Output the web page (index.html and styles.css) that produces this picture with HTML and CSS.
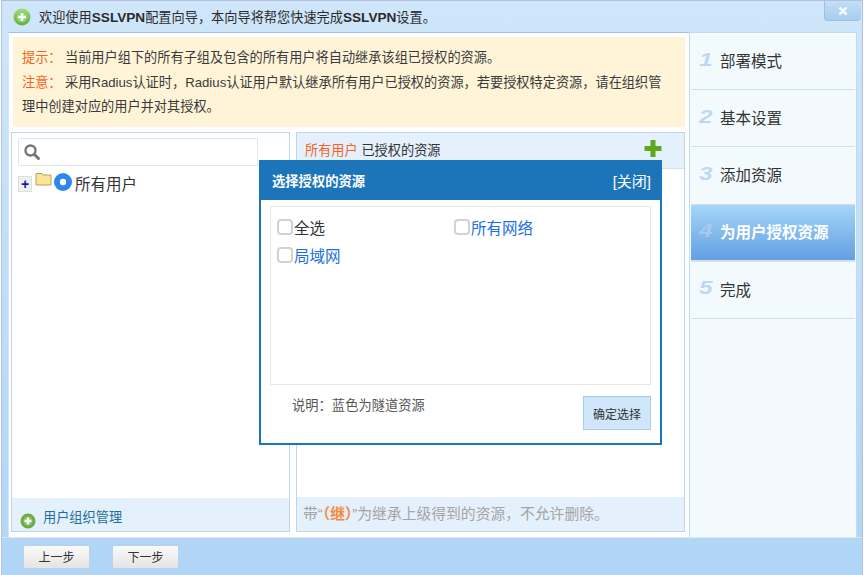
FILE: index.html
```html
<!DOCTYPE html>
<html lang="zh-CN">
<head>
  <meta charset="UTF-8">
  <title>SSLVPN配置向导</title>
  <link rel="stylesheet" href="styles.css">
</head>
<body>
  <div class="wizard">

    <div class="title-bar">
      <svg class="round-plus" width="18" height="18" viewBox="0 0 18 18">
        <defs>
          <linearGradient id="tipGreen" x1="0" y1="0" x2="0" y2="1">
            <stop offset="0" stop-color="#a4dc7e"/>
            <stop offset="1" stop-color="#5cb03c"/>
          </linearGradient>
        </defs>
        <circle cx="9" cy="9" r="8.500" fill="url(#tipGreen)"/>
        <circle cx="9" cy="9" r="5.500" fill="#8fd06c"/>
        <path d="M9 5v8M5 9h8" stroke="#fff" stroke-width="2.600"/>
      </svg>
      <span class="title-text">欢迎使用<b>SSLVPN</b>配置向导&#xFF0C;本向导将帮您快速完成<b>SSLVPN</b>设置。</span>
      <div class="close-tab">
        <svg width="10" height="10" viewBox="0 0 10 10"><path d="M1.500 1.500l7 7M8.500 1.500l-7 7" stroke="#fff" stroke-width="2.400"/></svg>
      </div>
    </div>

    <div class="body-row">
      <div class="main">
        <div class="notice">
          <p><span class="tag">提示&#xFF1A;</span>当前用户组下的所有子组及包含的所有用户将自动继承该组已授权的资源。</p>
          <p><span class="tag">注意&#xFF1A;</span>采用Radius认证时&#xFF0C;Radius认证用户默认继承所有用户已授权的资源&#xFF0C;若要授权特定资源&#xFF0C;请在组织管<br>理中创建对应的用户并对其授权。</p>
        </div>

        <div class="panels">
          <div class="panel left-panel">
            <div class="search-box">
              <svg width="18" height="18" viewBox="0 0 18 18">
                <circle cx="7.500" cy="7.500" r="5" fill="none" stroke="#777" stroke-width="2.400"/>
                <path d="M11.500 11.500l4 4" stroke="#777" stroke-width="3" stroke-linecap="round"/>
              </svg>
            </div>
            <div class="tree-row">
              <span class="expander">+</span>
              <svg class="folder" width="17" height="14" viewBox="0 0 17 14">
                <path d="M1 3V1.500h6L8 3h8v10H1z" fill="#f8e59a" stroke="#b5a25c"/>
              </svg>
              <svg class="node" width="18" height="18" viewBox="0 0 18 18">
                <circle cx="9" cy="9" r="9" fill="#2f86ec"/>
                <circle cx="9" cy="9" r="3.200" fill="#fff"/>
              </svg>
              <span class="tree-label">所有用户</span>
            </div>
            <div class="panel-foot org-foot">
              <svg class="org-icon" width="16" height="16" viewBox="0 0 16 16">
                <circle cx="8" cy="8" r="7.500" fill="#69ac46"/>
                <circle cx="8" cy="8" r="4.800" fill="#84c060"/>
                <path d="M8 4.500v7M4.500 8h7" stroke="#fff" stroke-width="2.400"/>
              </svg>
              <span>用户组织管理</span>
            </div>
          </div>

          <div class="panel right-panel">
            <div class="res-head">
              <span><span class="org">所有用户</span> 已授权的资源</span>
              <svg width="18" height="20" viewBox="0 0 18 20">
                <path d="M6.500 1h5v6h6v5h-6v6h-5v-6h-6V7h6z" fill="#5fa81e"/>
              </svg>
            </div>
            <div class="res-body"></div>
            <div class="panel-foot res-foot">带“<span class="org">&#xFF08;继&#xFF09;</span>”为继承上级得到的资源&#xFF0C;不允许删除。</div>
          </div>
        </div>
      </div>

      <ul class="steps">
        <li><i>1</i>部署模式</li>
        <li><i>2</i>基本设置</li>
        <li><i>3</i>添加资源</li>
        <li class="active"><i>4</i>为用户授权资源</li>
        <li><i>5</i>完成</li>
      </ul>
    </div>

    <div class="footer">
      <button class="step-btn">上一步</button>
      <button class="step-btn">下一步</button>
    </div>

    <div class="dialog">
      <div class="dialog-head">
        <b>选择授权的资源</b>
        <span class="dialog-close">[关闭]</span>
      </div>
      <div class="dialog-list">
        <label class="check"><span class="box"></span>全选</label>
        <label class="check tunnel"><span class="box"></span>所有网络</label>
        <label class="check tunnel"><span class="box"></span>局域网</label>
      </div>
      <div class="dialog-foot">
        <span class="legend">说明&#xFF1A;蓝色为隧道资源</span>
        <button class="ok-btn">确定选择</button>
      </div>
    </div>

  </div>
</body>
</html>
```

FILE: styles.css
```css
html, body { margin: 0; padding: 0; width: 100%; height: 100%; overflow: hidden; background: #fff; }
body { font-family: "Liberation Sans", "Noto Sans CJK SC", sans-serif; font-size: 13.200px; color: #333; }

.wizard { position: relative; width: 862px; height: 575px; box-sizing: border-box; margin-left: 1px; border: 1px solid #b4c0e0; border-bottom: none; background: linear-gradient(#cfe6fa, #b0d5f5); display: flex; flex-direction: column; }

.title-bar { height: 31px; display: flex; align-items: center; padding-left: 11px; position: relative; flex: none; }
.title-text { margin-left: 8px; color: #2b2b2b; }
.title-text b { font-size: 13.600px; }
.close-tab { position: absolute; right: 1px; top: 0; width: 37px; height: 20px; background: linear-gradient(#c3def7, #a7cdf0); border-radius: 0 0 4px 4px; border-left: 1px solid #9dbfe0; border-bottom: 1px solid #9dbfe0; box-sizing: border-box; display: flex; align-items: center; justify-content: center; }

.body-row { display: flex; flex: 1; min-height: 0; margin-left: 6px; margin-right: 5px; }
.main { width: 681px; background: #fff; padding: 4px 0 5px 2px; box-sizing: border-box; display: flex; flex-direction: column; border-top: 1px solid #9fc3e6; border-left: 1px solid #d5e6f5; }

.notice { height: 90px; margin-left: 2px; margin-right: 4px; box-sizing: border-box; background: #fff4d8; padding: 9px 0 0 9px; flex: none; white-space: nowrap; }
.notice p { margin: 0; line-height: 24.500px; color: #3a3a3a; }
.tag { color: #f4641e; display: inline-block; width: 43px; }

.panels { display: flex; gap: 6px; flex: 1; margin-top: 5px; min-height: 0; }
.panel { border: 1px solid #bcd6ec; box-sizing: border-box; display: flex; flex-direction: column; background: #fff; position: relative; }
.left-panel { width: 279px; }
.right-panel { width: 389px; margin-right: 4px; }

.search-box { height: 28px; margin: 5px 31px 0 6px; border: 1px solid #e6e6e6; box-sizing: border-box; display: flex; align-items: center; padding-left: 4px; flex: none; }

.tree-row { display: flex; align-items: center; height: 22px; margin: 5px 0 0 6px; }
.expander { width: 14px; height: 16px; line-height: 14px; text-align: center; background: #f0f0f0; border: 1px solid #e0e0e0; box-sizing: border-box; color: #1a1a9c; font-size: 14px; font-weight: bold; margin-top: 3px; }
.folder { margin: -6px 0 0 3px; }
.node { margin-left: 2px; }
.tree-label { font-size: 15.500px; margin-left: 3px; padding-top: 1px; color: #333; }

.panel-foot { margin-top: auto; background: #e4f0fb; flex: none; }
.org-foot { height: 33px; display: flex; align-items: flex-end; color: #1f6f9c; padding-left: 8px; }
.org-foot span { margin-left: 7px; line-height: 26px; }
.org-icon { margin-bottom: 2px; }
.res-foot { height: 34px; line-height: 35px; padding-left: 6px; font-size: 14.800px; color: #a4a4a4; }

.res-head { height: 36px; background: #e4f0fb; border-bottom: 1px solid #cfe2f2; display: flex; align-items: center; justify-content: space-between; padding: 0 22px 2px 8px; box-sizing: border-box; flex: none; }
.res-head svg { margin-top: -2px; }
.org { color: #f4641e; }
.res-foot .org { font-weight: bold; color: #f58a3c; }

.steps { list-style: none; margin: 0; padding: 0; flex: 1; background: #f3fafd; border: 1px solid #c3d9ec; border-bottom: none; box-sizing: border-box; }
.steps li { height: 57.200px; padding-bottom: 2px; display: flex; align-items: center; font-size: 15.500px; color: #333; border-bottom: 1px solid #d5dfe6; box-sizing: border-box; margin: 0 1px; }
.steps i { font-size: 18px; font-weight: bold; color: #bcd8f4; width: 29px; padding-left: 6px; box-sizing: border-box; transform: scaleX(1.35); transform-origin: left center; }
.steps li.active { background: linear-gradient(#a6d6f8, #629fe3); color: #fff; font-weight: bold; border-bottom: 2px solid #d5dfe6; }
.steps li.active i { color: #a9c9ec; }

.footer { height: 38px; display: flex; gap: 22px; align-items: center; padding-left: 21px; flex: none; border-top: 1px solid #dfe6ee; box-sizing: border-box; }
.step-btn { width: 67px; height: 24px; padding: 0; font: 12px "Liberation Sans", "Noto Sans CJK SC", sans-serif; color: #333; background: linear-gradient(#fafafa, #e4e4e4); border: 1px solid #bfd0e8; border-radius: 2px; }

.dialog { position: absolute; left: 257px; top: 159px; width: 403px; height: 285px; box-sizing: border-box; background: #fff; border: 2px solid #1c75b9; border-top: none; display: flex; flex-direction: column; }
.dialog-head { height: 40px; background: #1c75b9; color: #fff; display: flex; align-items: center; justify-content: space-between; margin: 0 -2px; padding: 0 11px 0 13px; flex: none; }
.dialog-head b { font-size: 13.300px; }
.dialog-close { font-size: 15px; }
.dialog-list { margin: 6px 9px 0 9px; height: 179px; border: 1px solid #e6e6e6; box-sizing: border-box; display: grid; grid-template-columns: 177px 1fr; grid-auto-rows: 28px; padding: 6px 0 0 6px; flex: none; }
.check { display: flex; align-items: center; font-size: 15.500px; height: 28px; color: #333; }
.tunnel { color: #1a6fe8; }
.box { width: 16px; height: 16px; border: 2px solid #d2d2d2; border-radius: 4px; box-sizing: border-box; margin-right: 1px; background: #fff; }
.dialog-foot { display: flex; justify-content: space-between; align-items: flex-start; padding: 11px 9px 0 31px; }
.legend { color: #555; letter-spacing: 0.100px; margin-top: -1px; }
.ok-btn { width: 68px; height: 34px; padding: 0; background: #cfe6fb; border: 1px solid #a9cbe6; font: 12px "Liberation Sans", "Noto Sans CJK SC", sans-serif; color: #333; }
```
